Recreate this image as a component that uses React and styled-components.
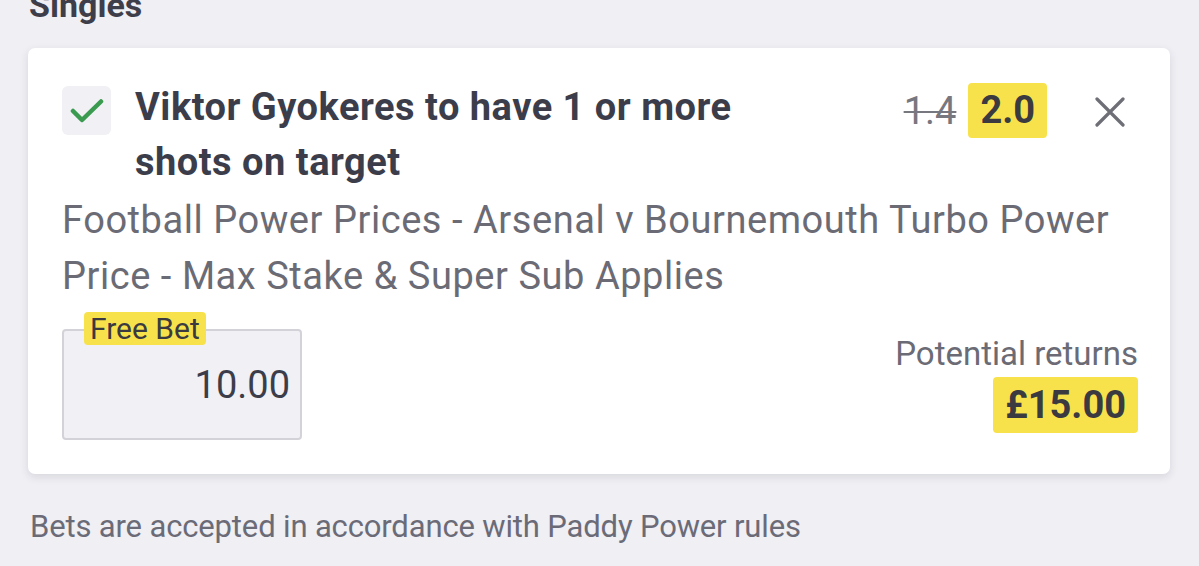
import React from 'react';
import styled, { createGlobalStyle } from 'styled-components';

const GlobalStyle = createGlobalStyle`
  html, body {
    margin: 0;
    padding: 0;
    background: #efeff4;
    font-family: Roboto, "Noto Sans", Arial, sans-serif;
    overflow: hidden;
  }
`;

const Page = styled.div`
  width: 1199px;
  height: 566px;
  padding: 0 28px;
  box-sizing: border-box;
  overflow: hidden;
`;

const SectionTitle = styled.h2`
  margin: -19px 0 0 1px;
  height: 46px;
  font-size: 34px;
  line-height: 48px;
  font-weight: 700;
  color: #3d3e4a;
`;

const Card = styled.div`
  margin-top: 21px;
  background: #fff;
  border-radius: 7px;
  box-shadow: 0 3px 8px rgba(40, 40, 60, 0.12);
  padding: 30px 32px 34px 34px;
  width: 1142px;
  box-sizing: border-box;
`;

const TopRow = styled.div`
  display: flex;
  align-items: flex-start;
`;

const Check = styled.div`
  width: 49px;
  height: 49px;
  flex: none;
  margin-top: 8px;
  border-radius: 6px;
  background: #f0f0f5;
  display: flex;
  align-items: center;
  justify-content: center;
`;

const Title = styled.div`
  margin: 2px 0 0 24px;
  flex: 1;
  font-size: 38px;
  line-height: 55px;
  font-weight: 700;
  letter-spacing: 0.5px;
  color: #3c3d4a;
`;

const TitleText = styled.span`
  display: block;
  max-width: 690px;
`;

const Odds = styled.div`
  display: flex;
  align-items: center;
  gap: 12px;
  margin-top: 5px;
`;

const OldPrice = styled.span`
  font-size: 38px;
  color: #77777f;
  text-decoration: line-through;
  text-decoration-thickness: 2px;
`;

const Highlight = styled.span`
  background: #f8e24b;
  border-radius: 4px;
  padding: 0 12px;
  font-size: 38px;
  font-weight: 700;
  line-height: ${(p) => p.$lh || '55px'};
  color: #3a3a40;
`;

const Close = styled.button`
  border: none;
  background: none;
  padding: 0;
  margin: 19px 13px 0 48px;
  width: 30px;
  height: 30px;
  display: flex;
  cursor: pointer;
`;

const Description = styled.div`
  margin-top: 2px;
  font-size: 38px;
  line-height: 56px;
  letter-spacing: 0.55px;
  color: #6b6b75;
`;

const BottomRow = styled.div`
  display: flex;
  justify-content: space-between;
  align-items: flex-end;
  margin-top: 25px;
`;

const StakeBox = styled.div`
  position: relative;
  width: 240px;
  height: 111px;
  box-sizing: border-box;
  border: 2px solid #d2d2d8;
  border-radius: 4px;
  background: #f0f0f5;
  display: flex;
  align-items: center;
  justify-content: flex-end;
  padding-right: 10px;
  font-size: 38px;
  color: #3c3d4a;
`;

const StakeLabel = styled.span`
  position: absolute;
  left: 20px;
  top: -19px;
  background: #f8e24b;
  border-radius: 4px;
  padding: 0 6px;
  font-size: 30px;
  line-height: 33px;
  color: #3a3a40;
`;

const Returns = styled.div`
  display: flex;
  flex-direction: column;
  align-items: flex-end;
  margin-bottom: 7px;
`;

const ReturnsLabel = styled.div`
  font-size: 33px;
  line-height: 46px;
  color: #6b6b75;
`;

const Footer = styled.p`
  margin: 33px 0 0 2px;
  font-size: 31px;
  line-height: 40px;
  letter-spacing: -0.15px;
  color: #6b6b78;
`;

export default function App() {
  return (
    <Page>
      <GlobalStyle />
      <SectionTitle>Singles</SectionTitle>
      <Card>
        <TopRow>
          <Check>
            <svg width="34" height="26" viewBox="0 0 34 26">
              <path d="M3 13 L12 22 L31 3.5" fill="none" stroke="#3a9a4f" strokeWidth="4.5" strokeLinecap="round" strokeLinejoin="round" />
            </svg>
          </Check>
          <Title>
            <TitleText>Viktor Gyokeres to have 1 or more shots on target</TitleText>
          </Title>
          <Odds>
            <OldPrice>1.4</OldPrice>
            <Highlight>2.0</Highlight>
          </Odds>
          <Close aria-label="Remove">
            <svg width="30" height="30" viewBox="0 0 30 30">
              <path d="M2 2 L28 28 M28 2 L2 28" stroke="#6e6e76" strokeWidth="3.2" strokeLinecap="round" />
            </svg>
          </Close>
        </TopRow>
        <Description>
          Football Power Prices - Arsenal v Bournemouth Turbo Power Price - Max Stake &amp; Super Sub Applies
        </Description>
        <BottomRow>
          <StakeBox>
            <StakeLabel>Free Bet</StakeLabel>
            10.00
          </StakeBox>
          <Returns>
            <ReturnsLabel>Potential returns</ReturnsLabel>
            <Highlight $lh="56px">£15.00</Highlight>
          </Returns>
        </BottomRow>
      </Card>
      <Footer>Bets are accepted in accordance with Paddy Power rules</Footer>
    </Page>
  );
}
